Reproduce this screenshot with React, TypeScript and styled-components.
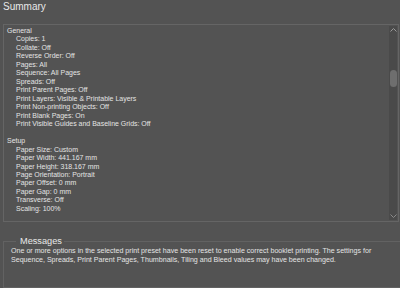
import React from 'react'
import styled, { createGlobalStyle } from 'styled-components'

const GlobalStyle = createGlobalStyle`
  html, body {
    margin: 0;
    padding: 0;
    background: #535353;
  }
  body {
    font-family: 'Liberation Sans', Arial, sans-serif;
    color: #e4e4e4;
  }
`

const StyledPage = styled.div`
  width: 400px;
  height: 288px;
  overflow: hidden;
  display: flex;
  flex-direction: column;
  background: #535353;
`

const StyledTitle = styled.div`
  height: 24px;
  box-sizing: border-box;
  padding: 1px 0 0 3px;
  font-size: 10px;
  line-height: 12px;
  color: #e8e8e8;
`

const StyledSummaryBox = styled.div`
  height: 198px;
  margin: 0 1px 0 3px;
  box-sizing: border-box;
  border: 1px solid #656565;
  display: flex;
  flex-direction: row;
`

const StyledList = styled.div`
  flex: 1;
  padding: 2px 0 0 3px;
  font-size: 6.98px;
  line-height: 8.48px;
  overflow: hidden;
`

const StyledLine = styled.div<{ $indent: boolean }>`
  height: 8.48px;
  padding-left: ${(props) => (props.$indent ? '9px' : '0')};
  white-space: nowrap;
`

const StyledScrollbar = styled.div`
  width: 8px;
  margin: 1px 1px 1px 0;
  background: #4a4a4a;
  display: flex;
  flex-direction: column;
  align-items: center;
  justify-content: space-between;
  padding: 2px 0;
  box-sizing: border-box;
`

const StyledThumbTrack = styled.div`
  flex: 1;
  width: 100%;
  display: flex;
  flex-direction: column;
  align-items: center;
  padding-top: 38px;
`

const StyledThumb = styled.div`
  width: 7px;
  height: 17px;
  border-radius: 4px;
  background: #6e6e6e;
`

const StyledFieldset = styled.fieldset`
  margin: 14px -20px 0 3px;
  padding: 0 0 0 7px;
  border: 1px solid #626262;
  border-right: none;
  flex: 1;
  min-width: 0;
`

const StyledLegend = styled.legend`
  margin-left: 5px;
  padding: 0 2px 0 4px;
  font-size: 9.2px;
  line-height: 11px;
  color: #e8e8e8;
`

const StyledMessage = styled.p`
  margin: 0;
  width: 376px;
  font-size: 7.1px;
  line-height: 9.3px;
  color: #e4e4e4;
`

type Line = { text: string; indent: boolean }

const groups: { title: string; items: string[] }[] = [
  {
    title: 'General',
    items: [
      'Copies: 1',
      'Collate: Off',
      'Reverse Order: Off',
      'Pages: All',
      'Sequence: All Pages',
      'Spreads: Off',
      'Print Parent Pages: Off',
      'Print Layers: Visible & Printable Layers',
      'Print Non-printing Objects: Off',
      'Print Blank Pages: On',
      'Print Visible Guides and Baseline Grids: Off',
    ],
  },
  {
    title: 'Setup',
    items: [
      'Paper Size: Custom',
      'Paper Width: 441.167 mm',
      'Paper Height: 318.167 mm',
      'Page Orientation: Portrait',
      'Paper Offset: 0 mm',
      'Paper Gap: 0 mm',
      'Transverse: Off',
      'Scaling: 100%',
    ],
  },
]

const lines: Line[] = groups.flatMap((group, i) => [
  ...(i > 0 ? [{ text: '', indent: false }] : []),
  { text: group.title, indent: false },
  ...group.items.map((text) => ({ text, indent: true })),
])

const ArrowUp = () => (
  <svg width='7' height='4' viewBox='0 0 7 4'>
    <path d='M0.5 3.5 L3.5 0.5 L6.5 3.5' fill='none' stroke='#9a9a9a' strokeWidth='1' />
  </svg>
)

const ArrowDown = () => (
  <svg width='7' height='4' viewBox='0 0 7 4'>
    <path d='M0.5 0.5 L3.5 3.5 L6.5 0.5' fill='none' stroke='#8a8a8a' strokeWidth='1' />
  </svg>
)

export default function App() {
  return (
    <>
      <GlobalStyle />
      <StyledPage>
        <StyledTitle>Summary</StyledTitle>
        <StyledSummaryBox>
          <StyledList>
            {lines.map((line, i) => (
              <StyledLine key={i} $indent={line.indent}>
                {line.text}
              </StyledLine>
            ))}
          </StyledList>
          <StyledScrollbar>
            <ArrowUp />
            <StyledThumbTrack>
              <StyledThumb />
            </StyledThumbTrack>
            <ArrowDown />
          </StyledScrollbar>
        </StyledSummaryBox>
        <StyledFieldset>
          <StyledLegend>Messages</StyledLegend>
          <StyledMessage>
            One or more options in the selected print preset have been reset to enable correct booklet printing. The
            settings for Sequence, Spreads, Print Parent Pages, Thumbnails, Tiling and Bleed values may have been
            changed.
          </StyledMessage>
        </StyledFieldset>
      </StyledPage>
    </>
  )
}
